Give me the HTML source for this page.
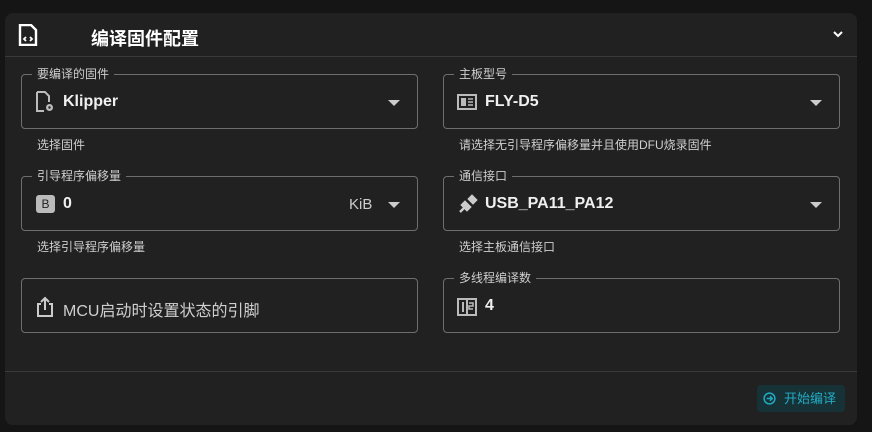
<!DOCTYPE html>
<html><head><meta charset="utf-8"><style>
*{box-sizing:border-box;margin:0;padding:0}
body{width:872px;height:432px;background:#151515;font-family:"Liberation Sans","Noto Sans CJK SC",sans-serif;color:#e6e6e6;position:relative;overflow:hidden}
.card{position:absolute;left:5px;top:13px;width:852px;height:412px;background:#212121;border-radius:8px}
.hdr{position:absolute;left:0;top:0;width:852px;height:44px;border-bottom:1px solid #3a3a3a}
.title{position:absolute;left:86px;top:12px;font-size:18px;color:#fff;font-weight:bold}
.f{position:absolute;width:397px;height:55px;border:1px solid #6e6e6e;border-radius:4px}
.lab{position:absolute;top:-9px;left:10px;padding:0 5px;background:#212121;font-size:12px;color:#cfcfcf;line-height:16px}
.val{position:absolute;left:41px;top:18px;font-size:16px;color:#f0f0f0;font-weight:bold}
.ic{position:absolute;left:13px;top:16px}
.arr{position:absolute;right:17px;top:25px;width:0;height:0;border-left:6px solid transparent;border-right:6px solid transparent;border-top:6px solid #ccc}
.help{position:absolute;font-size:12px;color:#cfcfcf}
.ftr{position:absolute;left:0;top:358px;width:852px;border-top:1px solid #3a3a3a}
.btn{position:absolute;left:752px;top:372px;width:88px;height:27px;background:#173236;border-radius:4px;color:#22aac4;font-size:13px;line-height:27px;padding-left:27px}
</style></head><body>
<div class="card">
<div class="hdr">
<svg style="position:absolute;left:13px;top:11px" width="20" height="22" viewBox="0 0 20 22"><path d="M2 1h11l5 5v15H2z" fill="none" stroke="#fff" stroke-width="2.4"/><path d="M8 13l-2 2 2 2M12 13l2 2-2 2" stroke="#fff" stroke-width="1.8" fill="none"/></svg>
<div class="title">编译固件配置</div>
<svg style="position:absolute;left:828px;top:17px" width="10" height="8" viewBox="0 0 10 8"><path d="M1 2l4 4 4-4" stroke="#fff" stroke-width="2" fill="none"/></svg>
</div>
</div>
<div class="f" style="left:21px;top:74px"><div class="lab">要编译的固件</div>
<svg class="ic" width="20" height="22" viewBox="0 0 20 22"><path d="M2 1h8l4 4v6M9 20H2V1" fill="none" stroke="#bbb" stroke-width="2"/><circle cx="14.5" cy="16.5" r="3.5" fill="#bbb"/><circle cx="14.5" cy="16.5" r="1.2" fill="#212121"/></svg>
<div class="val">Klipper</div><div class="arr"></div></div>
<div class="help" style="left:37px;top:136px">选择固件</div>
<div class="f" style="left:443px;top:74px"><div class="lab">主板型号</div>
<svg class="ic" width="20" height="20" viewBox="0 0 20 20" style="top:18px"><rect x="1" y="2" width="18" height="14" fill="none" stroke="#bbb" stroke-width="2"/><rect x="4" y="5" width="5" height="8" fill="#bbb"/><path d="M11 6h5M11 9h5M11 12h5" stroke="#bbb" stroke-width="1.5"/></svg>
<div class="val">FLY-D5</div><div class="arr"></div></div>
<div class="help" style="left:459px;top:136px">请选择无引导程序偏移量并且使用DFU烧录固件</div>
<div class="f" style="left:21px;top:176px"><div class="lab">引导程序偏移量</div>
<div style="position:absolute;left:14px;top:18px;width:19px;height:18px;background:#bbb;border-radius:3px;color:#212121;font-size:12px;text-align:center;line-height:18px">B</div>
<div class="val">0</div><div style="position:absolute;left:327px;top:19px;font-size:15px;color:#ccc">KiB</div><div class="arr"></div></div>
<div class="help" style="left:37px;top:238px">选择引导程序偏移量</div>
<div class="f" style="left:443px;top:176px"><div class="lab">通信接口</div>
<svg class="ic" width="22" height="22" viewBox="0 0 22 22"><path d="M3 19l4-4M15 3l-2 2M19 7l-2 2M8 9l5 5-3 3-5-5zM12 6l4 4 3-3-4-4z" stroke="#ccc" stroke-width="2.4" fill="#ccc"/></svg>
<div class="val">USB_PA11_PA12</div><div class="arr"></div></div>
<div class="help" style="left:459px;top:238px">选择主板通信接口</div>
<div class="f" style="left:21px;top:278px">
<svg class="ic" width="20" height="22" viewBox="0 0 20 22" style="top:17px"><path d="M6 8H3v12h14V8h-3M10 14V2M6 6l4-4 4 4" fill="none" stroke="#ccc" stroke-width="2"/></svg>
<div class="val" style="color:#cfcfcf;font-weight:normal">MCU启动时设置状态的引脚</div></div>
<div class="f" style="left:443px;top:278px"><div class="lab">多线程编译数</div>
<svg class="ic" width="20" height="20" viewBox="0 0 20 20" style="top:18px"><rect x="1" y="2" width="18" height="16" fill="none" stroke="#bbb" stroke-width="2"/><path d="M6 5v10M10 3v14" stroke="#bbb" stroke-width="2"/><path d="M12 6h4v3h-4v3h4" stroke="#bbb" stroke-width="1.5" fill="none"/></svg>
<div class="val">4</div></div>
<div class="card" style="background:none;pointer-events:none"><div class="ftr"></div>
<div class="btn"><svg style="position:absolute;left:6px;top:7px" width="13" height="13" viewBox="0 0 14 14"><circle cx="7" cy="7" r="5.8" fill="none" stroke="#22aac4" stroke-width="1.6"/><path d="M4 7h6M7.5 4.5L10 7 7.5 9.5" stroke="#22aac4" stroke-width="1.5" fill="none"/></svg>开始编译</div></div>
</body></html>
